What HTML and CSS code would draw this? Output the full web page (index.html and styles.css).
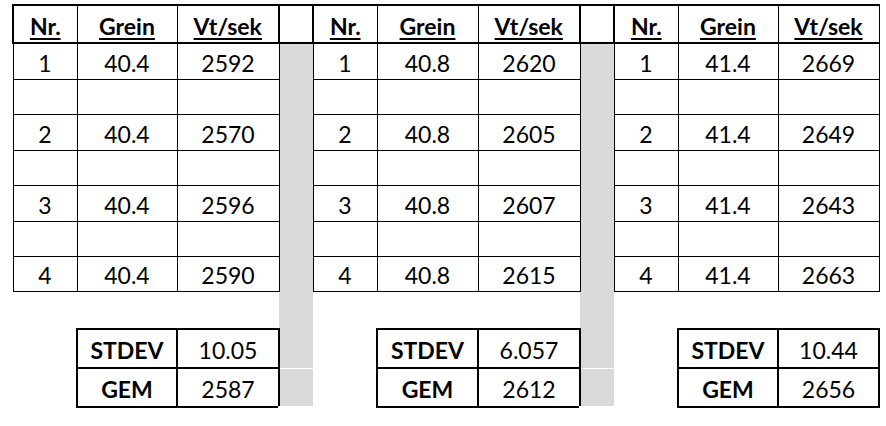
FILE: index.html
```html
<!DOCTYPE html>
<html lang="nl">
<head>
<meta charset="utf-8">
<title>Grein / Vt/sek</title>
<link rel="stylesheet" href="styles.css">
</head>
<body>
<table class="sheet">
  <colgroup>
    <col class="w-nr"><col class="w-gr"><col class="w-vt"><col class="w-gap">
    <col class="w-nr"><col class="w-gr2"><col class="w-vt"><col class="w-gap">
    <col class="w-nr"><col class="w-gr"><col class="w-vt3">
  </colgroup>
  <tr class="r-head">
    <td class="hdr first"><span>Nr.</span></td><td class="hdr"><span>Grein</span></td><td class="hdr"><span>Vt/sek</span></td><td class="gap-h"></td>
    <td class="hdr first"><span>Nr.</span></td><td class="hdr"><span>Grein</span></td><td class="hdr"><span>Vt/sek</span></td><td class="gap-h"></td>
    <td class="hdr first"><span>Nr.</span></td><td class="hdr"><span>Grein</span></td><td class="hdr last"><span>Vt/sek</span></td>
  </tr>
  <tr class="r-a">
    <td class="c">1</td><td class="c">40.4</td><td class="c">2592</td><td class="gray"></td>
    <td class="c">1</td><td class="c">40.8</td><td class="c">2620</td><td class="gray"></td>
    <td class="c">1</td><td class="c">41.4</td><td class="c">2669</td>
  </tr>
  <tr class="r-b">
    <td class="c"></td><td class="c"></td><td class="c"></td><td class="gray"></td>
    <td class="c"></td><td class="c"></td><td class="c"></td><td class="gray"></td>
    <td class="c"></td><td class="c"></td><td class="c"></td>
  </tr>
  <tr class="r-a">
    <td class="c">2</td><td class="c">40.4</td><td class="c">2570</td><td class="gray"></td>
    <td class="c">2</td><td class="c">40.8</td><td class="c">2605</td><td class="gray"></td>
    <td class="c">2</td><td class="c">41.4</td><td class="c">2649</td>
  </tr>
  <tr class="r-b">
    <td class="c"></td><td class="c"></td><td class="c"></td><td class="gray"></td>
    <td class="c"></td><td class="c"></td><td class="c"></td><td class="gray"></td>
    <td class="c"></td><td class="c"></td><td class="c"></td>
  </tr>
  <tr class="r-a">
    <td class="c">3</td><td class="c">40.4</td><td class="c">2596</td><td class="gray"></td>
    <td class="c">3</td><td class="c">40.8</td><td class="c">2607</td><td class="gray"></td>
    <td class="c">3</td><td class="c">41.4</td><td class="c">2643</td>
  </tr>
  <tr class="r-b">
    <td class="c"></td><td class="c"></td><td class="c"></td><td class="gray"></td>
    <td class="c"></td><td class="c"></td><td class="c"></td><td class="gray"></td>
    <td class="c"></td><td class="c"></td><td class="c"></td>
  </tr>
  <tr class="r-b">
    <td class="c">4</td><td class="c">40.4</td><td class="c">2590</td><td class="gray"></td>
    <td class="c">4</td><td class="c">40.8</td><td class="c">2615</td><td class="gray"></td>
    <td class="c">4</td><td class="c">41.4</td><td class="c">2663</td>
  </tr>
  <tr class="r-gap">
    <td></td><td></td><td></td><td class="gray"></td>
    <td></td><td></td><td></td><td class="gray"></td>
    <td></td><td></td><td></td>
  </tr>
  <tr class="r-stat">
    <td></td><td class="st lbl">STDEV</td><td class="st">10.05</td><td class="gray split"></td>
    <td></td><td class="st lbl">STDEV</td><td class="st">6.057</td><td class="gray split"></td>
    <td></td><td class="st lbl">STDEV</td><td class="st">10.44</td>
  </tr>
  <tr class="r-stat">
    <td></td><td class="st lbl">GEM</td><td class="st">2587</td><td class="gray end"></td>
    <td></td><td class="st lbl">GEM</td><td class="st">2612</td><td class="gray end"></td>
    <td></td><td class="st lbl">GEM</td><td class="st">2656</td>
  </tr>
</table>
</body>
</html>
```

FILE: styles.css
```css
html, body {
  margin: 0;
  padding: 0;
  background: #ffffff;
}

body {
  padding: 4px 0 0 12px;
}

.sheet {
  border-collapse: collapse;
  table-layout: fixed;
  width: 866px;
  font-family: Lato, "Open Sans", "Liberation Sans", sans-serif;
  font-size: 23px;
  color: #000000;
}

.w-nr { width: 64px; }
.w-gr { width: 100px; }
.w-gr2 { width: 101px; }
.w-vt { width: 102px; }
.w-vt3 { width: 101px; }
.w-gap { width: 34px; }

.sheet td {
  padding: 0 0 4px 0;
  text-align: center;
  vertical-align: bottom;
  line-height: 23px;
  white-space: nowrap;
}

.r-head td { height: 32px; }
.r-a td { height: 31px; }
.r-b td { height: 30px; }
.r-gap td { height: 32px; }
.r-stat td { height: 32px; }

.sheet td.hdr {
  font-weight: 700;
  border-top: 2px solid #000;
  border-bottom: 2px solid #000;
  border-left: 1px solid #000;
  border-right: 1px solid #000;
}

.sheet td.hdr.first {
  border-left: 2px solid #000;
}

.sheet td.hdr span {
  text-decoration: underline;
  text-decoration-thickness: 2px;
  text-underline-offset: 3px;
}

.sheet td.gap-h {
  border-top: 2px solid #000;
  border-bottom: 2px solid #000;
  border-left: 2px solid #000;
  border-right: 2px solid #000;
}

.sheet td.c {
  border: 1px solid #000;
}

.sheet td.gray {
  background: #d9d9d9;
}

.sheet td.gray.split {
  border-bottom: 1px solid #ffffff;
}

.sheet td.gray.end {
  border-bottom: 3px solid #ffffff;
}

.sheet td.st {
  border: 2px solid #000;
  padding-bottom: 5px;
}

.sheet td.st.lbl {
  font-weight: 700;
}
```
